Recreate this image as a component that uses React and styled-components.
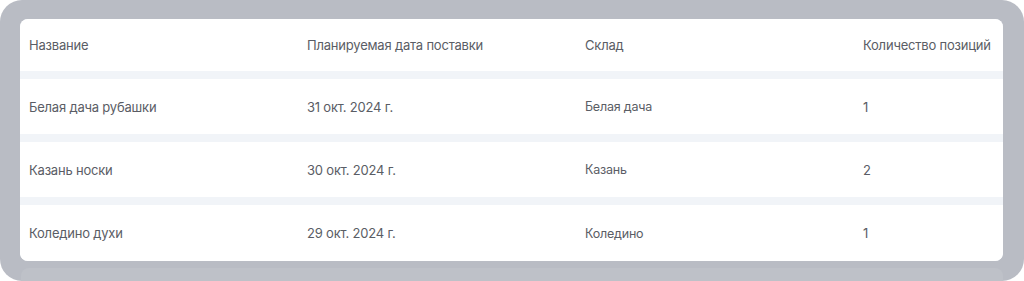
import React from 'react';
import styled, { createGlobalStyle } from 'styled-components';

const GlobalStyle = createGlobalStyle`
  html, body {
    margin: 0;
    padding: 0;
    background: #ffffff;
  }
  body {
    font-family: "Inter", "Noto Sans", sans-serif;
  }
`;

const columns = ['Название', 'Планируемая дата поставки', 'Склад', 'Количество позиций'];

const rows = [
  { name: 'Белая дача рубашки', date: '31 окт. 2024 г.', warehouse: 'Белая дача', count: 1 },
  { name: 'Казань носки', date: '30 окт. 2024 г.', warehouse: 'Казань', count: 2 },
  { name: 'Коледино духи', date: '29 окт. 2024 г.', warehouse: 'Коледино', count: 1 }
];

export default function App() {
  return (
    <>
      <GlobalStyle />
      <Overlay>
        <Card>
          <Row $header>
            {columns.map(c => (
              <Cell key={c}>{c}</Cell>
            ))}
          </Row>
          {rows.map(r => (
            <Row key={r.name}>
              <Cell>{r.name}</Cell>
              <Cell>{r.date}</Cell>
              <Cell $small>{r.warehouse}</Cell>
              <Cell>{r.count}</Cell>
            </Row>
          ))}
        </Card>
        <Peek />
      </Overlay>
    </>
  );
}

const Overlay = styled.div`
  box-sizing: border-box;
  width: 1024px;
  height: 281px;
  background: #b9bcc4;
  border-radius: 22px;
  padding: 19px 21px 0 20px;
  display: flex;
  flex-direction: column;
  overflow: hidden;
`;

const Card = styled.div`
  background: #f1f4f8;
  border-radius: 8px;
  display: flex;
  flex-direction: column;
  gap: 8px;
  overflow: hidden;
`;

const Row = styled.div`
  display: grid;
  grid-template-columns: 278px 278px 278px 1fr;
  align-items: center;
  height: ${({ $header }) => ($header ? '52px' : '55px')};
  padding-left: 9px;
  background: #ffffff;

  &:last-child {
    height: 56px;
  }
`;

const Cell = styled.div`
  font-size: ${({ $small }) => ($small ? '12.5px' : '13px')};
  color: #5a5d65;
  letter-spacing: -0.2px;
  white-space: nowrap;
`;

const Peek = styled.div`
  margin-top: 7px;
  margin-left: 1px;
  flex: 1;
  background: #bec1c8;
  border-radius: 8px 8px 0 0;
`;
